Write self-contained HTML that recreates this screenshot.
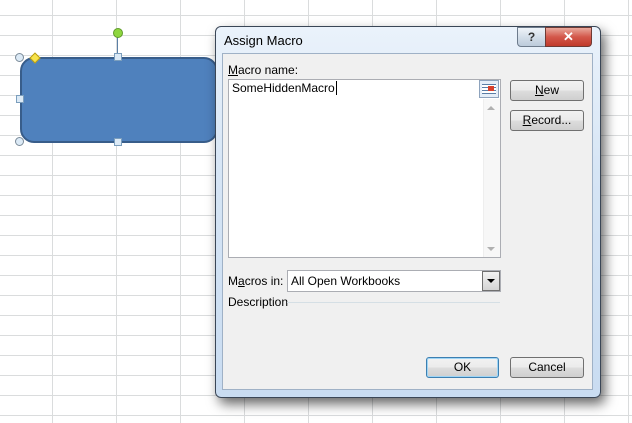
<!DOCTYPE html>
<html><head><style>
body{margin:0;width:632px;height:423px;overflow:hidden;background:#fff;position:relative;font-family:"Liberation Sans",sans-serif;font-size:12px;color:#000}
.grid{position:absolute;left:0;top:0;width:632px;height:423px;
background-image:linear-gradient(to right,#dadcdd 1px,transparent 1px),linear-gradient(to bottom,#dadcdd 1px,transparent 1px);
background-size:64px 20px;background-position:52px 15px}
.abs{position:absolute}
.btn{position:absolute;border:1px solid #707070;border-radius:3px;background:linear-gradient(#f2f2f2 0%,#ebebeb 50%,#dddddd 51%,#cfcfcf 100%);text-align:center;line-height:19px;font-size:12px}
.h{position:absolute;width:6px;height:6px;background:#dceaf6;border:1px solid #7b9ebd}
.c{position:absolute;width:7px;height:7px;border-radius:50%;background:#dceaf6;border:1px solid #7b8b99}
</style></head><body>
<div class="grid"></div>
<div class="abs" style="left:20px;top:57px;width:194px;height:82px;background:#4f81bd;border:2px solid #385d8a;border-radius:14px"></div>
<div class="abs" style="left:117px;top:37px;width:1px;height:20px;background:#5b7fa5"></div>
<div class="abs" style="left:113px;top:28px;width:8px;height:8px;border-radius:50%;background:#8ed63f;border:1px solid #5f9a2a"></div>
<div class="c" style="left:15px;top:53px"></div>
<div class="c" style="left:15px;top:137px"></div>
<div class="h" style="left:114px;top:53px"></div>
<div class="h" style="left:114px;top:138px"></div>
<div class="h" style="left:16px;top:95px"></div>
<div class="abs" style="left:31px;top:54px;width:6px;height:6px;background:#f7e34a;border:1px solid #b89c12;transform:rotate(45deg)"></div>
<!-- dialog -->
<div class="abs" style="left:215px;top:26px;width:384px;height:370px;border:1px solid #3a4656;border-radius:6px;background:linear-gradient(#eaf2fb,#d6e5f5 40%,#c9dcf1);box-shadow:4px 6px 12px rgba(0,0,0,.6)"></div>
<div class="abs" style="left:224px;top:33px;font-size:13px">Assign Macro</div>
<div class="abs" style="left:517px;top:27px;width:27px;height:18px;border:1px solid #6d7b8c;border-radius:0 0 0 4px;background:linear-gradient(#eef3f8,#d3dee9 50%,#bccbdb);text-align:center;font-weight:bold;color:#333;line-height:18px">?</div>
<div class="abs" style="left:545px;top:27px;width:45px;height:18px;border:1px solid #6e3a34;border-radius:0 0 4px 0;background:linear-gradient(#e9a99c,#d3574a 50%,#c03a2b);text-align:center;color:#fff;font-weight:bold;line-height:18px;font-size:13px">✕</div>
<div class="abs" style="left:222px;top:53px;width:369px;height:335px;background:#f0f0f0;border:1px solid #9fb1c6"></div>
<div class="abs" style="left:228px;top:63px"><u>M</u>acro name:</div>
<div class="abs" style="left:228px;top:79px;width:271px;height:19px;background:#fff;border:1px solid #abadb3"></div>
<div class="abs" style="left:232px;top:81px">SomeHiddenMacro<span style="border-left:1px solid #000;margin-left:1px"></span></div>
<div class="abs" style="left:479px;top:80px;width:18px;height:16px;border:1px solid #8ea3bd;background:#e5eef8"><div style="margin:3px 2px;width:14px;height:10px;background:repeating-linear-gradient(#5a7da6 0 1px,#fff 1px 3px)"></div><div class="abs" style="left:8px;top:5px;width:6px;height:5px;background:#d8402b"></div></div>
<div class="abs" style="left:228px;top:98px;width:271px;height:159px;background:#fff;border:1px solid #abadb3;border-top:none"></div>
<div class="abs" style="left:483px;top:99px;width:16px;height:158px;background:#f7f7f7;border-left:1px solid #eee"></div>
<div class="abs" style="left:487px;top:106px;border:4px solid transparent;border-bottom:4px solid #b0b0b0;border-top:none"></div>
<div class="abs" style="left:487px;top:247px;border:4px solid transparent;border-top:4px solid #b0b0b0;border-bottom:none"></div>
<div class="abs" style="left:228px;top:274px">M<u>a</u>cros in:</div>
<div class="abs" style="left:287px;top:270px;width:212px;height:20px;background:#fff;border:1px solid #abadb3"></div>
<div class="abs" style="left:291px;top:274px">All Open Workbooks</div>
<div class="abs" style="left:482px;top:271px;width:16px;height:18px;border:1px solid #707070;background:linear-gradient(#f2f2f2,#d4d4d4)"><div style="margin:7px 4px;border:4px solid transparent;border-top:4px solid #000;border-bottom:none;width:0"></div></div>
<div class="abs" style="left:228px;top:295px">Description</div>
<div class="abs" style="left:287px;top:302px;width:213px;height:1px;background:#d5dfe5"></div>
<div class="btn" style="left:510px;top:80px;width:72px;height:19px"><u>N</u>ew</div>
<div class="btn" style="left:510px;top:110px;width:72px;height:19px"><u>R</u>ecord...</div>
<div class="btn" style="left:426px;top:357px;width:71px;height:19px;border-color:#3c7fb1;box-shadow:inset 0 0 0 1px #9fd5f5">OK</div>
<div class="btn" style="left:510px;top:357px;width:72px;height:19px">Cancel</div>
</body></html>
